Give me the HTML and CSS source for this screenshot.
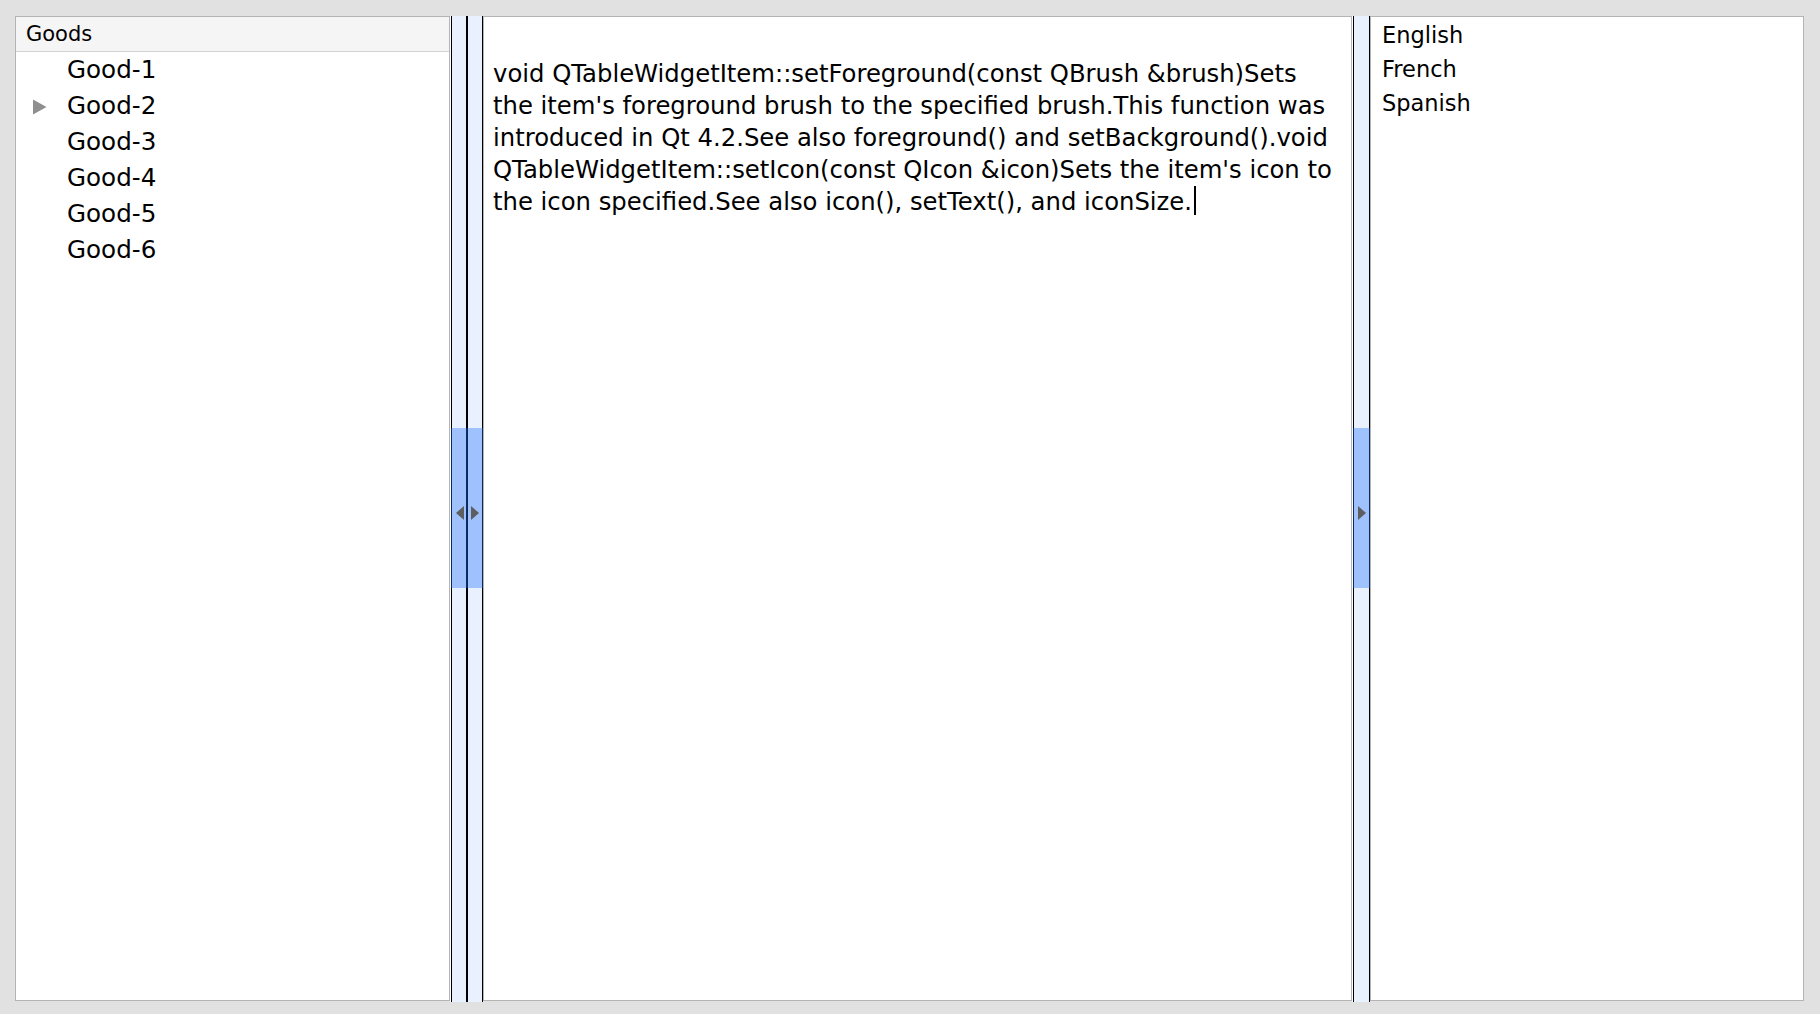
FILE: index.html
```html
<!DOCTYPE html>
<html>
<head>
<meta charset="utf-8">
<link rel="stylesheet" href="styles.css">
</head>
<body>
<div class="splitter">
  <div class="panel tree">
    <div class="tree-header">Goods</div>
    <div class="tree-row"><span class="branch"></span><span class="label">Good-1</span></div>
    <div class="tree-row"><span class="branch"><svg class="expander" width="16" height="16" viewBox="0 0 16 16"><polygon points="1,0.5 14.5,8 1,15.5" fill="#8f8f8f"/></svg></span><span class="label">Good-2</span></div>
    <div class="tree-row"><span class="branch"></span><span class="label">Good-3</span></div>
    <div class="tree-row"><span class="branch"></span><span class="label">Good-4</span></div>
    <div class="tree-row"><span class="branch"></span><span class="label">Good-5</span></div>
    <div class="tree-row"><span class="branch"></span><span class="label">Good-6</span></div>
  </div>

  <div class="handle handle-double">
    <div class="gap"></div>
    <div class="line"></div>
    <div class="pane"><span class="arrow arrow-left"></span></div>
    <div class="line line-thick"></div>
    <div class="pane"><span class="arrow arrow-right"></span></div>
    <div class="line"></div>
    <div class="hover"></div>
  </div>

  <div class="panel editor">
    <p class="doc">void QTableWidgetItem::setForeground(const QBrush &amp;brush)Sets the item's foreground brush to the specified brush.This function was introduced in Qt 4.2.See also foreground() and setBackground().void QTableWidgetItem::setIcon(const QIcon &amp;icon)Sets the item's icon to the icon specified.See also icon(), setText(), and iconSize.<span class="caret"></span></p>
  </div>

  <div class="handle handle-single">
    <div class="gap"></div>
    <div class="line"></div>
    <div class="pane pane-wide"><span class="arrow arrow-right"></span></div>
    <div class="line"></div>
    <div class="hover"></div>
  </div>

  <div class="panel list">
    <div class="list-item">English</div>
    <div class="list-item">French</div>
    <div class="list-item">Spanish</div>
  </div>
</div>
</body>
</html>
```
FILE: styles.css
```css
html, body {
  margin: 0;
  padding: 0;
  background: #e1e1e1;
}

body {
  padding: 16px 16px 0 15px;
  font-family: "DejaVu Sans", "Liberation Sans", sans-serif;
  color: #000;
}

.splitter {
  display: flex;
  align-items: flex-start;
  width: 1789px;
}

.panel {
  box-sizing: border-box;
  height: 985px;
  background: #fff;
  border: 1px solid #b4b4b4;
  flex: none;
}

/* ---------- tree ---------- */
.tree {
  width: 435px;
}

.tree-header {
  height: 34px;
  line-height: 34px;
  font-size: 21px;
  padding-left: 10px;
  background: #f5f5f5;
  border-bottom: 1px solid #d3d3d3;
}

.tree-row {
  display: flex;
  align-items: center;
  height: 36px;
}

.branch {
  width: 51px;
  height: 36px;
  display: flex;
  align-items: center;
  padding-left: 16px;
  box-sizing: border-box;
  flex: none;
}

.expander {
  display: block;
  margin-top: 1px;
}

.label {
  font-size: 24.6px;
  line-height: 36px;
  white-space: nowrap;
}

/* ---------- splitter handles ---------- */
.handle {
  position: relative;
  display: flex;
  height: 986px;
  flex: none;
}

.handle .gap {
  width: 1px;
  background: #ffffff;
}

.handle .line {
  width: 1px;
  background: #000;
  position: relative;
}

.handle .line-thick {
  width: 2px;
}

.handle .pane {
  width: 14px;
  background: #eaf1fe;
  display: flex;
  align-items: center;
  justify-content: center;
}

.handle .pane-wide {
  width: 15px;
}

.handle .hover {
  position: absolute;
  left: 1px;
  right: 0;
  top: 412px;
  height: 160px;
  background: rgba(30, 114, 255, 0.37);
}

.arrow {
  position: relative;
  z-index: 2;
  width: 0;
  height: 0;
  margin-top: 7px;
  border-top: 7px solid transparent;
  border-bottom: 7px solid transparent;
}

.arrow-left {
  border-right: 8px solid #5e5e5e;
  margin-left: 1px;
}

.arrow-right {
  border-left: 8px solid #5e5e5e;
}

/* ---------- text editor ---------- */
.editor {
  width: 869px;
  padding: 41px 12px 0 9px;
}

.doc {
  margin: 0;
  font-size: 24.3px;
  line-height: 32px;
}

.caret {
  display: inline-block;
  width: 2px;
  height: 29px;
  margin-left: 2px;
  background: #000;
  vertical-align: -5px;
}

/* ---------- list ---------- */
.list {
  width: 434px;
  padding: 1px 0 0 11px;
}

.list-item {
  height: 34px;
  line-height: 34px;
  font-size: 22.5px;
  white-space: nowrap;
}
```
